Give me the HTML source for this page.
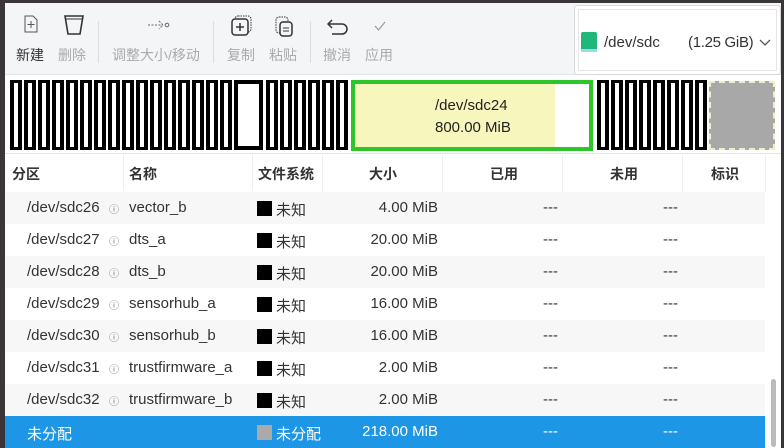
<!DOCTYPE html>
<html><head><meta charset="utf-8"><style>
*{box-sizing:border-box;margin:0;padding:0}
body{width:784px;height:448px;overflow:hidden;background:#3a3538;font-family:"Liberation Sans","Noto Sans CJK SC",sans-serif;position:relative}
.win{position:absolute;left:5px;top:3px;width:776px;height:445px;background:#fff}
.tb{position:absolute;left:0;top:0;width:776px;height:72px;background:#f4f5f7;border-bottom:1px solid #e2e2e2}
.lbl{position:absolute;top:42px;font-size:14px;color:#aaa}
.sep{position:absolute;top:18px;width:1px;height:42px;background:#ddd}
.combo{position:absolute;left:569px;top:2px;width:207px;height:70px;background:#fff;border:1px solid #d8d8d8;border-radius:3px}
.cells{position:absolute;top:77px;height:70px;display:flex}
.c{width:12px;height:70px;margin-right:2px;border:solid #000;border-width:3px 4px;background:#fff}
.row{position:absolute;left:0;width:760px;height:32px;font-size:15px;color:#333}
.row span{position:absolute;top:7px;white-space:nowrap}
.hd span{position:absolute;top:9px;font-size:14px;font-weight:bold;color:#333}
.vl{position:absolute;top:155px;width:1px;height:36px;background:#eee}
</style></head><body>
<div class="win">
 <div class="tb">
  <svg style="position:absolute;left:18px;top:12px" width="16" height="18"><path d="M2 1h8l4 4v12H2z" fill="none" stroke="#555" stroke-width="1"/><path d="M8 6v7M4.5 9.5h7" stroke="#555"/></svg>
  <svg style="position:absolute;left:58px;top:10px" width="22" height="24"><path d="M2 3h18l-3 18H5z" fill="none" stroke="#333" stroke-width="1.6"/><path d="M2 6h18" stroke="#333"/></svg>
  <div class="lbl" style="left:11px;color:#333">新建</div>
  <div class="lbl" style="left:53px">删除</div>
  <div class="sep" style="left:93px"></div>
  <svg style="position:absolute;left:142px;top:15px" width="24" height="14"><path d="M1 7h15M12 3l4 4-4 4" fill="none" stroke="#666" stroke-dasharray="2 1.5"/><circle cx="20" cy="7" r="1.8" fill="none" stroke="#666"/></svg>
  <div class="lbl" style="left:107px">调整大小/移动</div>
  <div class="sep" style="left:208px"></div>
  <svg style="position:absolute;left:226px;top:12px" width="22" height="22"><rect x="4" y="1" width="16" height="16" rx="3" fill="none" stroke="#333" stroke-dasharray="1.5 1"/><rect x="1" y="4" width="16" height="16" rx="3" fill="#f4f5f7" stroke="#333" stroke-width="1.5"/><path d="M9 8v8M5 12h8" stroke="#333" stroke-width="1.5"/></svg>
  <svg style="position:absolute;left:269px;top:12px" width="20" height="24"><rect x="2" y="2" width="12" height="16" rx="3" fill="none" stroke="#333" stroke-dasharray="1.5 1"/><rect x="6" y="7" width="12" height="14" rx="3" fill="#f4f5f7" stroke="#333" stroke-width="1.5"/><path d="M9 13h6M9 16h6" stroke="#333"/></svg>
  <div class="lbl" style="left:222px">复制</div>
  <div class="lbl" style="left:264px">粘贴</div>
  <div class="sep" style="left:305px"></div>
  <svg style="position:absolute;left:322px;top:15px" width="24" height="18"><path d="M5 2L1 6l4 4M1 6h14a5 5 0 0 1 0 10H5" fill="none" stroke="#333" stroke-width="1.5"/></svg>
  <svg style="position:absolute;left:368px;top:17px" width="14" height="12"><path d="M2 6l3.5 4L12 2" fill="none" stroke="#999" stroke-width="1.2"/></svg>
  <div class="lbl" style="left:318px">撤消</div>
  <div class="lbl" style="left:360px">应用</div>
  <div class="combo">
   <div style="position:absolute;left:3px;top:3px;right:3px;bottom:3px;border:1px solid #e4e4e4"></div>
   <div style="position:absolute;left:6px;top:26px;width:16px;height:20px;background:#1fb87a;border-radius:2px 2px 0 0"></div>
   <div style="position:absolute;left:6px;top:43px;width:16px;height:3px;background:#9fd6e8"></div>
   <div style="position:absolute;left:29px;top:28px;font-size:15px;color:#333">/dev/sdc</div>
   <div style="position:absolute;left:113px;top:28px;font-size:15px;color:#333;letter-spacing:-0.3px">(1.25 GiB)</div>
   <svg style="position:absolute;left:184px;top:33px" width="12" height="8"><path d="M1 1l5 5 5-5" fill="none" stroke="#555" stroke-width="1.3"/></svg>
  </div>
 </div>
 <div class="cells" style="left:5px"><div class="c"></div><div class="c"></div><div class="c"></div><div class="c"></div><div class="c"></div><div class="c"></div><div class="c"></div><div class="c"></div><div class="c"></div><div class="c"></div><div class="c"></div><div class="c"></div><div class="c"></div><div class="c"></div><div class="c"></div><div class="c"></div></div>
 <div style="position:absolute;left:229px;top:77px;width:29px;height:70px;border:4px solid #000;background:#fff"></div>
 <div class="cells" style="left:261px"><div class="c"></div><div class="c"></div><div class="c"></div><div class="c"></div><div class="c"></div><div class="c"></div></div>
 <div style="position:absolute;left:346px;top:77px;width:242px;height:71px;border:4px solid #2ec52a;background:linear-gradient(90deg,#f7f7bd 0,#f7f7bd 200px,#fff 200px)"></div>
 <div style="position:absolute;left:430px;top:92px;font-size:15px;color:#222;line-height:22px">/dev/sdc24<br>800.00 MiB</div>
 <div class="cells" style="left:592px"><div class="c"></div><div class="c"></div><div class="c"></div><div class="c"></div><div class="c"></div><div class="c"></div><div class="c"></div><div class="c"></div></div>
 <div style="position:absolute;left:704px;top:78px;width:66px;height:69px;background:#a8a8a8;border:2px dashed #f0eec4"></div>
 <div style="position:absolute;left:0;top:150px;width:776px;height:1px;background:#e6e6e6"></div>
 <div class="hd" style="position:absolute;left:0;top:152px;width:760px;height:36px">
  <span style="left:7px">分区</span><span style="left:124px">名称</span><span style="left:253px">文件系统</span><span style="left:364px">大小</span><span style="left:485px">已用</span><span style="left:605px">未用</span><span style="left:706px">标识</span>
 </div>
 <div class="vl" style="left:118px;top:152px"></div><div class="vl" style="left:247px;top:152px"></div><div class="vl" style="left:317px;top:152px"></div><div class="vl" style="left:437px;top:152px"></div><div class="vl" style="left:557px;top:152px"></div><div class="vl" style="left:677px;top:152px"></div><div class="vl" style="left:760px;top:152px"></div>
 <div id="rows"></div>
 <div style="position:absolute;left:760px;top:189px;width:16px;height:256px;background:#fff"></div>
 <div style="position:absolute;left:766px;top:376px;width:5px;height:68px;border-radius:3px;background:#bbb"></div>
</div>
<script>
var d=[["/dev/sdc26","vector_b","4.00"],["/dev/sdc27","dts_a","20.00"],["/dev/sdc28","dts_b","20.00"],["/dev/sdc29","sensorhub_a","16.00"],["/dev/sdc30","sensorhub_b","16.00"],["/dev/sdc31","trustfirmware_a","2.00"],["/dev/sdc32","trustfirmware_b","2.00"]];
var h="";
d.forEach(function(r,i){h+='<div class="row" style="top:'+(189+i*32)+'px;background:'+(i%2?'#fff':'#f7f7f7')+'"><span style="left:22px">'+r[0]+'</span><span style="left:104px;font-size:10px;top:9px;color:#777">&#9432;</span><span style="left:124px">'+r[1]+'</span><span style="left:252px;top:9px;width:15px;height:15px;background:#000"></span><span style="left:271px">未知</span><span style="right:327px">'+r[2]+' MiB</span><span style="left:538px">---</span><span style="left:658px">---</span></div>';});
h+='<div class="row" style="top:413px;background:#1e96e6;color:#fff"><span style="left:22px">未分配</span><span style="left:252px;top:9px;width:15px;height:15px;background:#aaa"></span><span style="left:271px">未分配</span><span style="right:327px">218.00 MiB</span><span style="left:538px">---</span><span style="left:658px">---</span></div>';
document.getElementById("rows").innerHTML=h;
</script>
</body></html>
